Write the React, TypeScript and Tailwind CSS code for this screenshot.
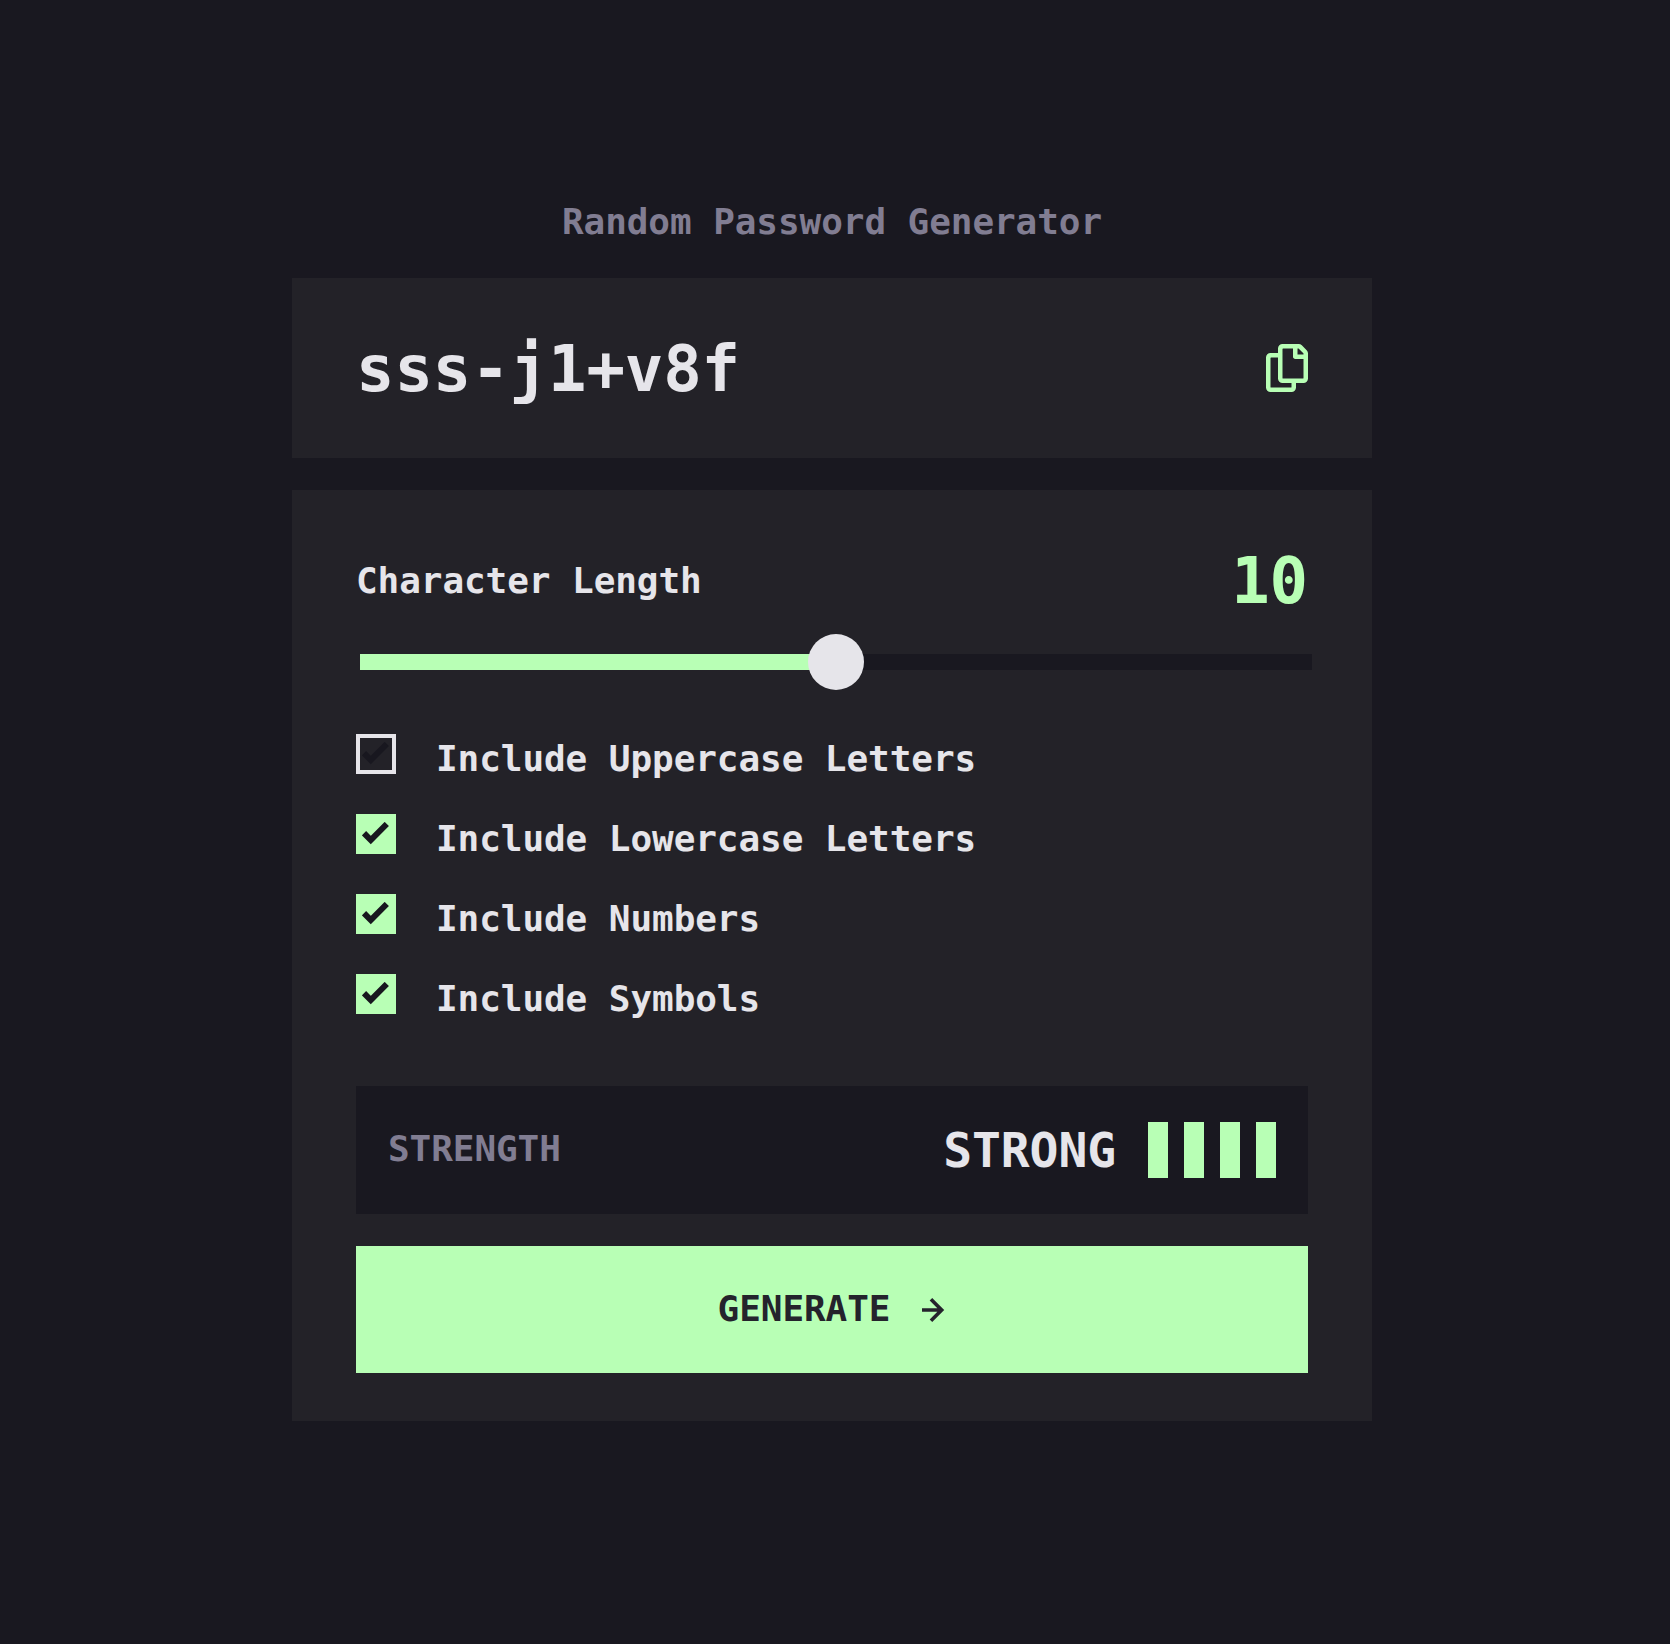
const MONO = "font-['DejaVu_Sans_Mono',monospace] font-bold whitespace-pre";
const BODY = "text-[36px] leading-[48px] tracking-[-0.07px]";

const options = [
  { label: "Include Uppercase Letters", checked: false },
  { label: "Include Lowercase Letters", checked: true },
  { label: "Include Numbers", checked: true },
  { label: "Include Symbols", checked: true },
];

function CopyIcon() {
  return (
    <svg width="42" height="48" viewBox="0 0 21 24" fill="#b8ffb5">
      <path d="M20.341 3.091 17.909.659A2.25 2.25 0 0 0 16.319 0H8.25A2.25 2.25 0 0 0 6 2.25V4.5H2.25A2.25 2.25 0 0 0 0 6.75v15A2.25 2.25 0 0 0 2.25 24h10.5A2.25 2.25 0 0 0 15 21.75V19.5h3.75A2.25 2.25 0 0 0 21 17.25V4.682a2.25 2.25 0 0 0-.659-1.591ZM12.469 21.75H2.53a.281.281 0 0 1-.281-.281V7.03a.281.281 0 0 1 .281-.281H6v10.5a2.25 2.25 0 0 0 2.25 2.25h4.5v1.969a.282.282 0 0 1-.281.281Zm6-4.5H8.53a.281.281 0 0 1-.281-.281V2.53a.281.281 0 0 1 .281-.281H13.5v4.125c0 .621.504 1.125 1.125 1.125h4.125v9.469a.282.282 0 0 1-.281.281Zm.281-12h-3v-3h.451c.075 0 .147.03.2.082L18.667 4.6a.283.283 0 0 1 .082.199v.451Z" />
    </svg>
  );
}

function Checkbox({ checked }: { checked: boolean }) {
  return (
    <span
      className={
        checked
          ? "flex size-10 shrink-0 items-start bg-[#b8ffb5] pt-2 pl-1.5"
          : "flex size-10 shrink-0 items-start border-4 border-[#e6e5ea] pt-1 pl-0.5"
      }
    >
      <svg width="28" height="24" viewBox="0 0 14 12" fill="none" stroke="#18171f" strokeWidth="3">
        <path d="M1 5.607 4.393 9l8-8" />
      </svg>
    </span>
  );
}

export default function App() {
  return (
    <div className={`${MONO} h-[1644px] w-[1670px] bg-[#191820] pt-[198px] text-[#e6e5ea]`}>
      <main className="ml-[292px] flex w-[1080px] flex-col">
        <h1 className={`${BODY} text-center text-[#817d92]`}>Random Password Generator</h1>

        <section className="mt-8 flex h-[180px] items-center justify-between bg-[#232228] px-16">
          <span className="pt-0.5 text-[64px] leading-[84px] tracking-[-0.13px]">sss-j1+v8f</span>
          <button aria-label="Copy password">
            <CopyIcon />
          </button>
        </section>

        <section className="mt-8 flex h-[931px] flex-col bg-[#232228] px-16 pt-12">
          <div className="flex h-[84px] items-center justify-between pt-0.5">
            <span className={BODY}>Character Length</span>
            <span className="text-[64px] leading-[84px] tracking-[-0.13px] text-[#b8ffb5]">10</span>
          </div>

          <div className="mt-3 ml-1 flex h-14 w-[952px] items-center">
            <div className="h-4 w-[476px] bg-[#b8ffb5]" />
            <div className="z-10 -mx-7 size-14 shrink-0 rounded-full bg-[#e6e5ea]" />
            <div className="h-4 flex-1 bg-[#191820]" />
          </div>

          <ul className="mt-11 flex flex-col gap-10">
            {options.map((o) => (
              <li key={o.label} className="flex h-10 items-start gap-10">
                <Checkbox checked={o.checked} />
                <span className={`${BODY} pt-px`}>{o.label}</span>
              </li>
            ))}
          </ul>

          <div className="mt-[72px] flex h-32 shrink-0 items-center bg-[#191820] px-8">
            <span className={`${BODY} flex-1 pb-0.5 text-[#817d92]`}>STRENGTH</span>
            <span className="text-[48px] leading-[64px] tracking-[-0.1px]">STRONG</span>
            <div className="ml-8 flex gap-4">
              <span className="h-14 w-5 bg-[#b8ffb5]" />
              <span className="h-14 w-5 bg-[#b8ffb5]" />
              <span className="h-14 w-5 bg-[#b8ffb5]" />
              <span className="h-14 w-5 bg-[#b8ffb5]" />
            </div>
          </div>

          <button className="mt-8 flex h-[127px] shrink-0 items-center justify-center gap-8 bg-[#b8ffb5] text-[#24232c]">
            <span className={`${BODY} pb-px`}>GENERATE</span>
            <svg width="24" height="24" viewBox="0 0 12 12" fill="#24232c">
              <path d="m5.106 12 6-6-6-6-1.265 1.265 3.841 3.84H.001v1.79h7.681l-3.841 3.84z" />
            </svg>
          </button>
        </section>
      </main>
    </div>
  );
}
